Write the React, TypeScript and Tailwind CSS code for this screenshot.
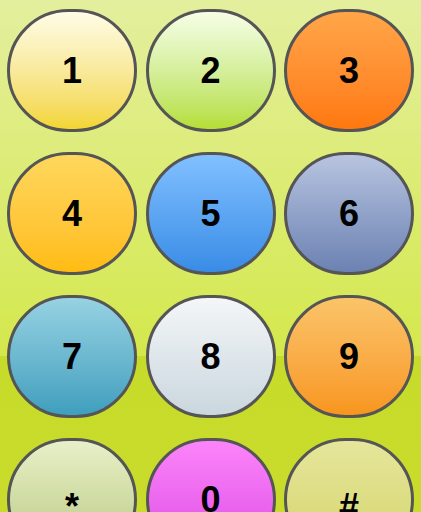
import React from "react";

const keys: { label: string; cls: string; low?: boolean }[] = [
  { label: "1", cls: "from-[#fffce6] to-[#f3d52e]" },
  { label: "2", cls: "from-[#f6fee6] to-[#b6de32]" },
  { label: "3", cls: "from-[#ffa648] to-[#ff780c]" },
  { label: "4", cls: "from-[#ffd75c] to-[#ffbc0e]" },
  { label: "5", cls: "from-[#80c0ff] to-[#388ce6]" },
  { label: "6", cls: "from-[#b8c4e0] to-[#6c82b2]" },
  { label: "7", cls: "from-[#96d2e2] to-[#3e9fbe]" },
  { label: "8", cls: "from-[#f4f6f8] to-[#cad7de]" },
  { label: "9", cls: "from-[#fac468] to-[#f8961c]" },
  { label: "*", cls: "from-[#e8f0c8] to-[#b8c880]", low: true },
  { label: "0", cls: "from-[#fc84fa] to-[#dc48e4]" },
  { label: "#", cls: "from-[#e6e69c] to-[#d4d468]", low: true },
];

export default function App() {
  return (
    <div className="h-[512px] w-[421px] overflow-hidden bg-[linear-gradient(to_bottom,#e4ef9e_0%,#d4e84c_69.5%,#c7db2a_69.5%,#c9dc2c_100%)]">
      <div className="grid grid-cols-[130px_130px_130px] gap-x-[8.5px] gap-y-[20px] pl-[7px] pt-[9px]">
        {keys.map((k) => (
          <div
            key={k.label}
            className={`flex h-[123px] w-[130px] items-center justify-center rounded-full border-[3px] border-[#555555] bg-linear-to-b ${k.cls}`}
          >
            <span
              className={`font-['Liberation_Sans',Arial,sans-serif] text-[36px] font-bold text-black ${
                k.low ? "translate-y-[7px]" : ""
              }`}
            >
              {k.label}
            </span>
          </div>
        ))}
      </div>
    </div>
  );
}
